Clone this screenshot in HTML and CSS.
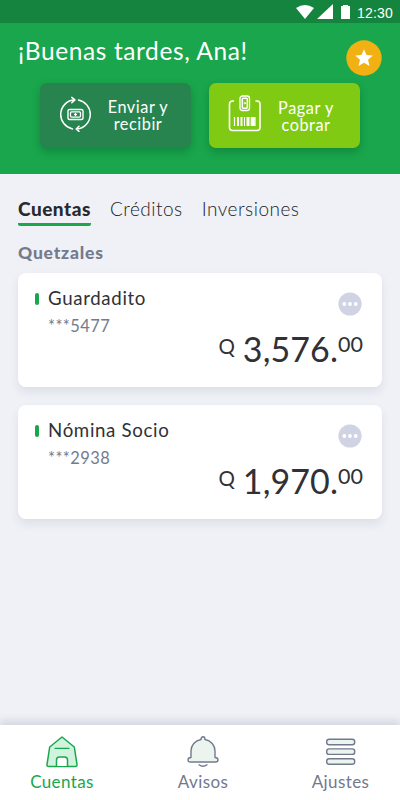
FILE: index.html
```html
<!DOCTYPE html>
<html lang="es">
<head>
<meta charset="utf-8">
<title>Cuentas</title>
<link rel="stylesheet" href="styles.css">
</head>
<body>
<div class="app">
  <div class="status">
    <svg width="56" height="17" viewBox="0 0 56 17" fill="#fff"><path d="M0 4Q9-2 18 4L9 15ZM21 15 37 0V15ZM45 2h2V1h5v1h2v13h-9Z"/></svg>
    <span class="clock">12:30</span>
  </div>
  <header class="header">
    <div class="hello">
      <h1>¡Buenas tardes, Ana!</h1>
      <svg class="star" width="36" height="36" viewBox="0 0 36 36"><circle cx="18" cy="18" r="17.7" fill="#f2b113"/><path d="M18 9.2l2.5 5.9 6.4.5-4.9 4.2 1.5 6.3-5.5-3.4-5.5 3.4 1.5-6.3-4.9-4.2 6.4-.5Z" fill="#fff"/></svg>
    </div>
    <div class="actions">
      <button class="action send">
        <svg width="34" height="36" viewBox="0 0 34 36" fill="none" stroke="#fff" stroke-width="1.5" stroke-linecap="round" stroke-linejoin="round"><path d="M13.500 32.900A14.800 14.800 0 0 1 1.700 18.500 14.800 14.800 0 0 1 15.700 3.800M12.800 1.400 15.900 3.900 12.800 6.700M19.500 4A14.800 14.800 0 0 1 31.300 18.500 14.800 14.800 0 0 1 17.500 33M20 30.300 17.200 33 20 35.300"/><rect x="9" y="13.500" width="15" height="10" rx="1.500" stroke-width="1.400"/><rect x="11.500" y="15.900" width="10" height="5.200" rx="1" stroke-width="1.300"/><path d="M16.500 17.500v2M15.500 18.500h2" stroke-width="1.300"/></svg>
        <span>Enviar y<br>recibir</span>
      </button>
      <button class="action pay">
        <svg width="34" height="38" viewBox="0 0 34 38" fill="none" stroke="#fff" stroke-width="1.6" stroke-linecap="round" stroke-linejoin="round"><path d="M5.500 6H4.500a3 3 0 0 0-3 3V32.500A3 3 0 0 0 4.500 35.500H29A3 3 0 0 0 32 32.500V9A3 3 0 0 0 29 6H28"/><rect x="12" y="1" width="9.500" height="14.500" rx="2.500" stroke-width="1.300"/><rect x="14.300" y="3.300" width="5" height="9.900" rx="1" stroke-width="1.500"/><circle cx="16.800" cy="8.200" r=".7" stroke-width="1"/><path d="M6.500 22V31M27 22V31" stroke-width="1.200" stroke-linecap="butt"/><path d="M9 22h2v9H9ZM12.500 22h2v9h-2ZM16 22h1v9h-1ZM18.500 22h3v9h-3ZM22.700 22h4v9h-4Z" fill="#fff" stroke="none"/></svg>
        <span>Pagar y<br>cobrar</span>
      </button>
    </div>
  </header>
  <main class="main">
    <nav class="tabs">
      <a class="tab active">Cuentas</a><a class="tab creditos">Créditos</a><a class="tab inversiones">Inversiones</a>
    </nav>
    <h2>Quetzales</h2>
    <section class="card">
      <div class="top"><i class="mark"></i><div class="info"><div class="name guardadito">Guardadito</div><div class="num">***5477</div></div>
      <svg class="more" width="24" height="24" viewBox="0 0 24 24"><circle cx="12" cy="12" r="11.600" fill="#d0d3e3"/><g fill="#fff"><circle cx="6.300" cy="12" r="1.900"/><circle cx="12" cy="12" r="1.900"/><circle cx="17.700" cy="12" r="1.900"/></g></svg></div>
      <div class="amount"><span class="cur">Q</span><span class="int">3,576.</span><span class="dec">00</span></div>
    </section>
    <section class="card">
      <div class="top"><i class="mark"></i><div class="info"><div class="name nomina">Nómina Socio</div><div class="num">***2938</div></div>
      <svg class="more" width="24" height="24" viewBox="0 0 24 24"><circle cx="12" cy="12" r="11.600" fill="#d0d3e3"/><g fill="#fff"><circle cx="6.300" cy="12" r="1.900"/><circle cx="12" cy="12" r="1.900"/><circle cx="17.700" cy="12" r="1.900"/></g></svg></div>
      <div class="amount"><span class="cur">Q</span><span class="int">1,970.</span><span class="dec">00</span></div>
    </section>
  </main>
  <footer class="bottom">
    <a class="item on"><svg width="34" height="34" viewBox="0 0 34 34" fill="#d0f3de" stroke="#19a64c" stroke-width="1.500" stroke-linejoin="round" stroke-linecap="round"><path d="M17 2 29.300 12 32 29.500Q32.300 31.500 30.300 31.500H3.700Q1.700 31.500 2 29.500L4.700 12Z"/><path d="M10 13.300H24" stroke-width="1.300"/><path d="M11.500 31V25Q11.500 22 14.500 22H19.500Q22.500 22 22.500 25V31" fill="#fff"/></svg><span>Cuentas</span></a>
    <a class="item avisos"><svg width="34" height="34" viewBox="0 0 34 34" fill="#ecf4f0" stroke="#73798d" stroke-width="1.400" stroke-linejoin="round" stroke-linecap="round"><path d="M15 4.500C15 .800 19 .800 19 4.500 25 5.500 29 10.500 29 16V22.500Q32 22.500 32 24.700 32 27 29.500 27H4.500Q2 27 2 24.700 2 22.500 5 22.500V16C5 10.500 9 5.500 15 4.500Z"/><path d="M13 29.800Q17 32.800 21 29.800" fill="none"/></svg><span>Avisos</span></a>
    <a class="item ajustes"><svg width="34" height="34" viewBox="0 0 34 34" fill="#ecf4f0" stroke="#73798d" stroke-width="1.400"><rect x="2.700" y="4.200" width="28" height="5.500" rx="2.500"/><rect x="2.700" y="13.900" width="28" height="5.500" rx="2.500"/><rect x="2.700" y="23.700" width="28" height="5.500" rx="2.500"/></svg><span>Ajustes</span></a>
  </footer>
</div>
</body>
</html>
```
FILE: styles.css
```css
*{box-sizing:border-box}
body{margin:0;font-family:Lato,"Liberation Sans",sans-serif;color:#303136}
.app{width:400px;height:800px;display:flex;flex-direction:column;background:#eff1f6;overflow:hidden}
.status{height:23px;background:#14843f;color:#fff;display:flex;justify-content:flex-end;align-items:flex-start;padding:4px 7px 0 0;flex:none}
.status svg{margin-right:5px}
.clock{font:14px/18px "Liberation Sans",sans-serif;letter-spacing:.2px}
.header{height:151px;background:#19a64c;padding:0 40px;flex:none;color:#fff}
.hello{height:60px;display:flex;justify-content:space-between;align-items:flex-start;margin:0 -22px 0 -22px}
h1{margin:13px 0 0;font-size:24.5px;line-height:30px;font-weight:400;letter-spacing:.6px}
.star{margin:17px 0 0 0}
.actions{display:flex;justify-content:space-between}
.action{width:151px;height:65px;border:0;border-radius:7px;padding:0;color:#fff;font:16.3px/17px Lato,sans-serif;display:flex;align-items:center;box-shadow:0 4px 8px rgba(0,70,30,.3);letter-spacing:.55px}
.action svg{flex:none;margin-left:19px;margin-top:-4px}
.action span{flex:1;text-align:center;margin:-2px 8px 0 0}
.pay span{margin:0 10px 0 0}
.send{background:#27844f}
.pay{background:#80ca13}
.main{padding:24px 18px 0;flex:1}
.tabs{display:flex;height:28px;font-size:19px;line-height:22px}
.tab{margin-right:19px}
.tab.creditos,.tab.inversiones{font-weight:300;letter-spacing:.5px;color:#202126}
.tab.active{font-weight:900;height:28px;border-bottom:3px solid #19a64c;width:73px;border-radius:2px;color:#29292d;letter-spacing:.5px;white-space:nowrap}
h2{margin:17px 0 10px;font-size:17.5px;line-height:20px;font-weight:900;color:#747b8d;letter-spacing:.8px}
.card{height:114px;margin-bottom:18px;border-radius:8px;background:#fff;box-shadow:0 5px 9px rgba(60,75,100,.1);padding:15px 18px 0 17px}
.top{display:flex;align-items:flex-start;height:44px}
.mark{width:4px;height:12px;border-radius:2px;background:#19a64c;margin:5px 9px 0 0}
.info{flex:1}
.name{font-size:18.7px;line-height:20px;letter-spacing:.65px}
.num{font-size:16.5px;line-height:20px;margin-top:8px;color:#747b8d;letter-spacing:.4px}
.more{margin:4px 2px 0 0}
.amount{display:flex;justify-content:flex-end;height:44px;line-height:36px}
.cur{font-size:20.5px;margin:-4px 8px 0 0}
.int{font-size:34px;letter-spacing:.1px;margin-top:-1px}
.dec{font-size:21.5px;margin:-6px 1px 0 0}
.bottom{height:75px;flex:none;background:#fff;box-shadow:0 -4px 8px rgba(60,70,100,.16);display:flex}
.item{display:flex;flex-direction:column;align-items:center;color:#73798d;font-size:17px;line-height:20px;letter-spacing:.4px;padding-top:10px;width:124px}
.item span{margin-top:3px}
.on{color:#19a64c}
.avisos{width:158px}
.ajustes{width:117px}
```
